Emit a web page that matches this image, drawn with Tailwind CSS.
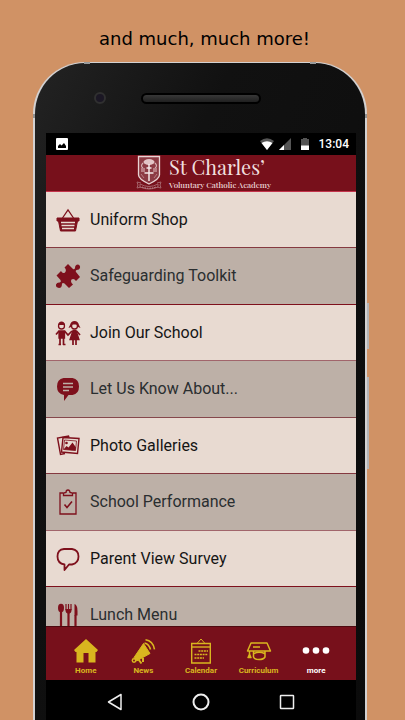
<!DOCTYPE html>
<html lang="en">

<head>
    <meta charset="UTF-8">
    <meta name="viewport" content="width=device-width, initial-scale=1.0">
    <title>St Charles' Voluntary Catholic Academy</title>
    <script src="https://cdn.jsdelivr.net/npm/@tailwindcss/browser@4"></script>
</head>

<body class="h-screen flex flex-col overflow-hidden bg-[#d09265] font-['Roboto',sans-serif]">
    <h1 class="h-[62px] pt-[26px] pl-1 shrink-0 text-center text-[18px] leading-[26px] text-black font-['DejaVu_Sans',sans-serif]">and much, much more!</h1>

    <!-- phone -->
    <div class="relative flex-1 min-h-0 ml-[33px] mr-[38px] flex flex-col rounded-t-[52px] border-x-2 border-t border-[#d3d1d1] bg-linear-to-br from-[#232323] via-[#111111] via-30% to-[#0b0b0b] pl-[11px] pr-[9px]">
        <span class="absolute -top-px left-[49px] w-1.5 h-0.5 bg-[#999b9c]"></span>
        <span class="absolute -top-px right-[49px] w-1.5 h-0.5 bg-[#999b9c]"></span>
        <span class="absolute top-[51px] -left-0.5 w-0.5 h-1 bg-[#929292]"></span>
        <span class="absolute top-[51px] -right-0.5 w-0.5 h-1 bg-[#929292]"></span>
        <span class="absolute top-[240px] -right-1 w-0.5 h-[46px] bg-[#b3b3b5]"></span>
        <span class="absolute top-[314px] -right-1 w-0.5 h-[92px] bg-[#b3b3b5]"></span>

        <!-- camera and speaker -->
        <div class="relative h-[70px] shrink-0 flex items-center justify-center">
            <span class="absolute left-12 size-3 rounded-full border-2 border-[#303030] bg-[#1b1724]"></span>
            <span class="w-[120px] h-[11px] rounded-full border-2 border-black bg-linear-to-b from-[#383838] to-[#202020]"></span>
        </div>

        <div class="flex-1 min-h-0 flex flex-col">
            <!-- status bar -->
            <div class="h-[22px] shrink-0 bg-black flex items-center pl-2.5 pr-[7px] text-white">
                <svg class="size-3" viewBox="0 0 12 12">
                    <rect width="12" height="12" rx="1" fill="#fff" />
                    <path d="M2 10V8l2-2 1.5 1.5L8 5l2 3v2z" fill="#000" />
                </svg>
                <svg class="ml-auto w-4 h-3" viewBox="0 0 16 12">
                    <path d="M1 3Q8-2.500 15 3L8 12z" fill="#555" />
                    <path d="M2.500 5Q8 1.500 13.500 5L8 12z" fill="#fff" />
                </svg>
                <svg class="ml-1 size-3" viewBox="0 0 12 12">
                    <path d="M12 0v12H0z" fill="#555" />
                    <path d="M5 7v5H0z" fill="#fff" />
                </svg>
                <svg class="ml-2.5 w-2 h-3" viewBox="0 0 8 12">
                    <path d="M2 0h4v1h2v11H0V1h2z" fill="#555" />
                    <path d="M0 7.500h8V12H0z" fill="#fff" />
                </svg>
                <span class="ml-2.5 text-xs leading-4 font-medium">13:04</span>
            </div>

            <!-- school header -->
            <header class="h-[37px] shrink-0 flex justify-center items-start gap-1.5 pl-1 border-b border-[#c4344c] bg-[#77101b] text-[#f0dfdf]">
                <svg class="w-7 h-9" viewBox="0 0 28 36" fill="none">
                    <path d="M3.500 1.500h21v18.500q0 4-10.500 9-10.500-5-10.500-9z" fill="#8c3a43" stroke="#e8d3d3" stroke-width="1.300" />
                    <ellipse cx="14" cy="7" rx="5.500" ry="3" fill="#e2c4c6" />
                    <path d="M8 8Q5 11 8 13M20 8q3 3 0 5" stroke="#d6b0b3" stroke-width="1.200" />
                    <path d="M6 13h4v4H6zM18 13h4v4h-4z" fill="#b97d83" />
                    <path d="M14 9v17M11.500 13h5M9.500 18h9" stroke="#f4e8e8" stroke-width="1.500" />
                    <path d="M6 19l3 4M22 19l-3 4" stroke="#b97d83" />
                    <path d="M6 28l-4-1 1 3-1 3 4-1M22 28l4-1-1 3 1 3-4-1M5 29q9 5 18 0v3q-9 4-18 0z" stroke="#a5656c" />
                    <path d="M7 32q7 2.500 14 0" stroke="#c9979c" stroke-dasharray="1.500 1" />
                </svg>
                <div class="font-['Playfair_Display','Liberation_Serif',serif]">
                    <p class="text-[20px] leading-6">St Charles’</p>
                    <p class="text-[8px] leading-3 font-medium">Voluntary Catholic Academy</p>
                </div>
            </header>

            <!-- menu -->
            <nav class="flex-1 min-h-0 overflow-hidden text-base text-[#151515]">
                <a href="#" class="h-14 flex items-center gap-2 pl-2 bg-[#e8dad1] border-b border-[#853940]">
                    <svg class="size-7" viewBox="0 0 28 28" fill="none" stroke="#7e101c">
                        <path d="M8.500 12l5.500-8 5.500 8" stroke-width="1.300" />
                        <path d="M3 12h22v3h-1.500L21.500 25h-15L4.500 15H3z" fill="#7e101c" stroke-linejoin="round" />
                        <path d="M7 16.500h14M7.500 19.500h13M8 22.500h12" stroke="#e8dad1" stroke-width="1.300" />
                    </svg>
                    Uniform Shop
                </a>
                <a href="#" class="h-[57px] flex items-center gap-2 pl-2 bg-[#bdb0a7] text-[#2a2e30] border-b border-[#7e101c]">
                    <svg class="size-7" viewBox="0 0 28 28" fill="#7e101c">
                        <path d="M2.500 13.500L7 9q1.500 3 4 1.500Q13 8 10.500 5.500L14 2l5 5q1.500 1 2-1 0-3.500 3-3.500 2.500.5 2 3.500-.5 2-3.500 2-1.500 1-.5 2l4 5-4 4q-2-3-4.500-1.500-1.500 2.500 1.500 5L15 26l-4.500-4.500q-1.500-1-2.500 0 0 4.500-3 4.500-3.500-.5-3-3.500 1-2.500 4-2 1.500-1 .5-2.500z" />
                    </svg>
                    Safeguarding Toolkit
                </a>
                <a href="#" class="h-14 flex items-center gap-2 pl-2 bg-[#e8dad1] border-b border-[#a1656b]">
                    <svg class="size-7" viewBox="0 0 28 28" fill="none" stroke="#7e101c" stroke-width="1.300">
                        <circle cx="7.500" cy="7" r="3" />
                        <path d="M4 6q.5-3.500 3.500-3.500T11 6z" fill="#7e101c" stroke="none" />
                        <path d="M5 12h5.500v7H5z" fill="#7e101c" />
                        <path d="M5 12l-3 3.500M10.500 12l3.500 4 4-4M6 18v8M9.500 18v8M4.500 25.500H7M9 25.500h2.500" stroke-width="1.700" />
                        <circle cx="20.500" cy="7" r="3" />
                        <path d="M16 6q1-4 4.500-4T25 6l1.500 3L24 8l-1-2.500h-5L17 8l-2.500 1z" fill="#7e101c" stroke="none" />
                        <path d="M19 11.500h3l3 9h-9z" fill="#7e101c" />
                        <path d="M22.500 12l3.500 4M19 20v6M22 20v6" stroke-width="1.700" />
                    </svg>
                    Join Our School
                </a>
                <a href="#" class="h-[57px] flex items-center gap-2 pl-2 bg-[#bdb0a7] text-[#2a2e30] border-b border-[#85474c]">
                    <svg class="size-7" viewBox="0 0 28 28" fill="none">
                        <path d="M9.500 3h9q6.500 1 6.500 8.500T18.500 20h-4L10 26v-6q-7-1-7-8.500T9.500 3z" fill="#7e101c" />
                        <path d="M9 8.500h10M9 12h10M9 15.500h6" stroke="#bdb0a7" stroke-width="1.300" />
                    </svg>
                    Let Us Know About...
                </a>
                <a href="#" class="h-14 flex items-center gap-2 pl-2 bg-[#e8dad1] border-b border-[#853940]">
                    <svg class="size-7" viewBox="0 0 28 28" fill="none" stroke="#7e101c" stroke-width="1.400">
                        <path d="M15 5.500l-.5-1.500L3.500 6l3 16.500 4.500-1" />
                        <path d="M9 5.500l16 1-1.500 15-16-1.500z" />
                        <path d="M10.500 8l12 1-1 9.500-12-1z" stroke-width=".8" />
                        <circle cx="12.500" cy="11" r="1.300" fill="#7e101c" stroke="none" />
                        <path d="M9.500 17.500l3-3.500 2 1.500 4-5 3.500 5-.5 3z" fill="#7e101c" stroke="none" />
                    </svg>
                    Photo Galleries
                </a>
                <a href="#" class="h-[57px] flex items-center gap-2 pl-2 bg-[#bdb0a7] text-[#2a2e30] border-b border-[#a1656b]">
                    <svg class="size-7" viewBox="0 0 28 28" fill="none" stroke="#7e101c" stroke-width="1.300">
                        <path d="M9 5H6v21h16V5h-3" />
                        <path d="M9.500 7.500h9V5L16 4.500Q16 2 14 2t-2 2.500L9.500 5z" />
                        <path d="M10.500 16.500l2.500 3 5-6" stroke-width="1.600" />
                    </svg>
                    School Performance
                </a>
                <a href="#" class="h-14 flex items-center gap-2 pl-2 bg-[#e8dad1] border-b border-[#7e101c]">
                    <svg class="size-7" viewBox="0 0 28 28" fill="none" stroke="#7e101c" stroke-width="1.800" stroke-linejoin="round">
                        <path d="M10 4h8q6.500 1 6.500 7.500T18 19.500h-3L10.500 25v-5.500Q3.500 18.500 3.500 11.500T10 4z" />
                    </svg>
                    Parent View Survey
                </a>
                <a href="#" class="h-14 flex items-center gap-2 pl-2 bg-[#bdb0a7] text-[#2a2e30]">
                    <svg class="size-7" viewBox="0 0 28 28" fill="none" stroke="#7e101c">
                        <ellipse cx="7" cy="7" rx="3" ry="4.200" fill="#7e101c" stroke="none" />
                        <path d="M7 10v17M14.500 11v16M21.500 14v13" stroke-width="2.200" />
                        <path d="M12 3v6M14.500 3v6M17 3v6" stroke-width="1.200" />
                        <path d="M11.500 8h6v2q0 2-3 3-3-1-3-3z" fill="#7e101c" stroke="none" />
                        <path d="M20.500 3q3 1 3 7v4.500h-3z" fill="#7e101c" stroke="none" />
                    </svg>
                    Lunch Menu
                </a>
            </nav>

            <!-- tabs -->
            <nav class="h-[54px] shrink-0 flex px-[11px] pt-3 border-t border-[#4d0a10] bg-[#77101b] text-[#d9b61f] text-[8px] leading-3 font-bold text-center">
                <a href="#" class="flex-1 flex flex-col items-center">
                    <svg class="size-[26px]" viewBox="0 0 26 26" fill="currentColor">
                        <path d="M13 0l12 11-1.500 2H22.500v10.500h-7V14h-5v9.500h-7V13H2.500L1 11z" />
                    </svg>
                    Home
                </a>
                <a href="#" class="flex-1 flex flex-col items-center">
                    <svg class="size-[26px]" viewBox="0 0 26 26" fill="none" stroke="currentColor">
                        <path d="M13.500 4.500L20 14.500 6.500 22 4 18.500z" fill="currentColor" />
                        <circle cx="4" cy="21.500" r="1.700" stroke-width="1.500" />
                        <path d="M8.500 20.500l3 4M13 19v4" stroke-width="2" />
                        <path d="M14.500 4q4.500 1 6 6.500M15.500.8q7.500 1 9 9.500" stroke-width="1.600" />
                    </svg>
                    News
                </a>
                <a href="#" class="flex-1 flex flex-col items-center">
                    <svg class="size-[26px]" viewBox="0 0 26 26" fill="none" stroke="currentColor" stroke-width="1.400">
                        <path d="M9 4.500L13 0l4 4.500" stroke-width="1" />
                        <path d="M3.700 4.500h18.600V24H3.700z" />
                        <path d="M4 8h18" />
                        <path d="M10.500 12H20M6.500 15.500H20M6.500 19H16" stroke-dasharray="2 .7" />
                    </svg>
                    Calendar
                </a>
                <a href="#" class="flex-1 flex flex-col items-center">
                    <svg class="size-[26px]" viewBox="0 0 26 26" fill="none" stroke="currentColor" stroke-width="1.500" stroke-linejoin="round">
                        <path d="M5 4h16l3.500 8h-23z" />
                        <path d="M7 8h7M7.500 12v6q1 2.500 5.500 2.500t6-2.500v-6M8 14.500q5-2.500 10.500 0" />
                        <path d="M3.500 12v5" />
                        <path d="M3.500 15.500L5 18.500H2z" fill="currentColor" />
                    </svg>
                    Curriculum
                </a>
                <a href="#" class="flex-1 flex flex-col items-center text-white">
                    <svg class="w-7 h-[26px]" viewBox="0 0 28 26" fill="currentColor">
                        <circle cx="4" cy="11.500" r="3.300" />
                        <circle cx="14" cy="11.500" r="3.300" />
                        <circle cx="24" cy="11.500" r="3.300" />
                    </svg>
                    more
                </a>
            </nav>

            <!-- system buttons -->
            <div class="h-10 shrink-0 flex items-center justify-between px-[60px] pt-1 bg-black">
                <button aria-label="Back">
                    <svg class="size-[18px]" viewBox="0 0 18 18" fill="none" stroke="#eee" stroke-width="1.500" stroke-linejoin="round">
                        <path d="M15 1.500v15L2.500 9z" />
                    </svg>
                </button>
                <button aria-label="Home">
                    <svg class="size-[18px]" viewBox="0 0 18 18" fill="none" stroke="#eee" stroke-width="2">
                        <circle cx="9" cy="9" r="7.500" />
                    </svg>
                </button>
                <button aria-label="Recent apps">
                    <svg class="size-[18px]" viewBox="0 0 18 18" fill="none" stroke="#eee" stroke-width="1.500">
                        <rect x="2.500" y="2.500" width="13" height="13" rx=".5" />
                    </svg>
                </button>
            </div>
        </div>
    </div>
</body>

</html>
